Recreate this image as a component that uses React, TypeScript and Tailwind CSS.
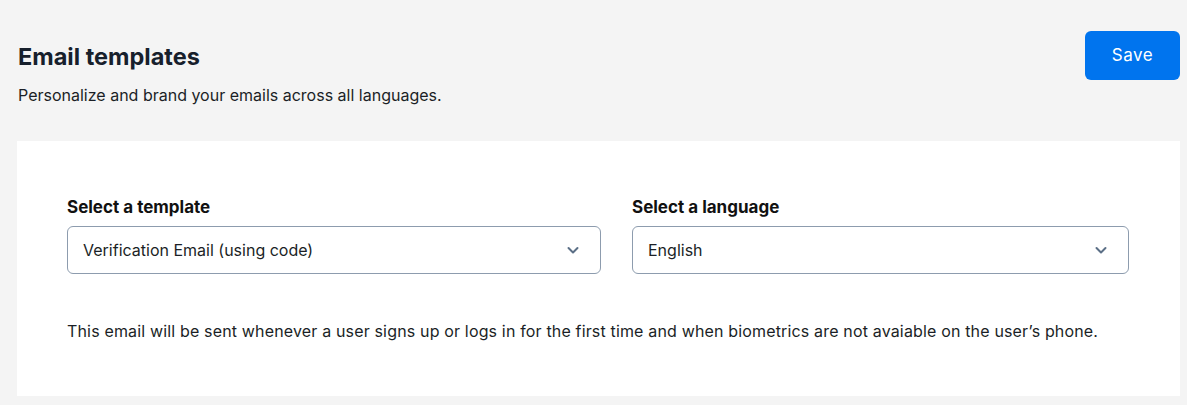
import React from "react";

function Chevron() {
  return (
    <svg width="14" height="14" viewBox="0 0 14 14" fill="none" className="shrink-0">
      <path d="M2.5 5 L7 9.5 L11.5 5" stroke="#5b6f86" strokeWidth="2" strokeLinecap="round" strokeLinejoin="round" />
    </svg>
  );
}

function Select({ label, value, className }: { label: string; value: string; className: string }) {
  return (
    <div className={className}>
      <div className="text-[17px] font-bold text-[#111111] leading-[20px] mb-[9px]">{label}</div>
      <div className="h-[48px] border border-[#8d9cae] rounded-[6px] flex items-center justify-between pl-[15px] pr-[20px] bg-white">
        <span className="text-[16px] text-[#1b1f26]">{value}</span>
        <Chevron />
      </div>
    </div>
  );
}

export default function App() {
  return (
    <div className="min-h-[405px] bg-[#f4f4f4] pl-[17px] pr-[7px] pt-[31px] pb-[10px]" style={{ fontFamily: "Inter, 'Noto Sans', sans-serif" }}>
      <div className="flex justify-between items-start">
        <div className="pl-[1px]">
          <h1 className="text-[23.5px] font-bold text-[#17202c] leading-[28px] mt-[12px]">Email templates</h1>
          <p className="text-[16px] text-[#1b1f26] mt-[14px] leading-[20px]">Personalize and brand your emails across all languages.</p>
        </div>
        <button className="w-[95px] h-[49px] rounded-[6px] bg-[#0074ee] text-white text-[17px] tracking-[0.5px]">Save</button>
      </div>
      <div className="bg-white mt-[36px] pt-[56px] pl-[50px] pr-[51px] pb-[55px]">
        <div className="flex gap-[31px]">
          <Select className="w-[534px]" label="Select a template" value="Verification Email (using code)" />
          <Select className="flex-1" label="Select a language" value="English" />
        </div>
        <p className="mt-[47px] text-[16px] tracking-[0.16px] text-[#1b1f26] leading-[20px]">
          This email will be sent whenever a user signs up or logs in for the first time and when biometrics are not avaiable on the user’s phone.
        </p>
      </div>
    </div>
  );
}
